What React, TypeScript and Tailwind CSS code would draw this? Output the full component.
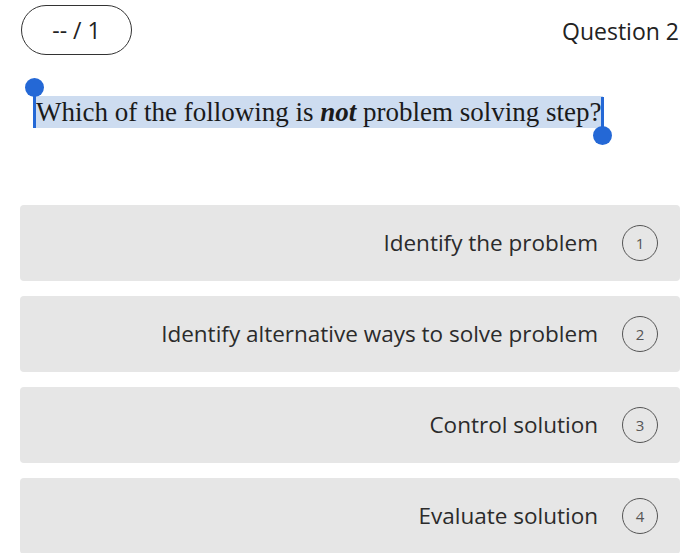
import React from 'react';

const options = [
  { n: 1, label: 'Identify the problem' },
  { n: 2, label: 'Identify alternative ways to solve problem' },
  { n: 3, label: 'Control solution' },
  { n: 4, label: 'Evaluate solution' },
];

function OptionCard({ n, label }: { n: number; label: string }) {
  return (
    <div className="h-[76px] rounded-[4px] bg-[#e6e6e6] flex items-center justify-end pr-[22px] gap-[24px]">
      <span className="text-[22.5px] text-[#2b2b2b]">{label}</span>
      <span className="w-[36px] h-[36px] rounded-full border-[1.5px] border-[#555] grid place-items-center text-[15px] text-[#555]">
        {n}
      </span>
    </div>
  );
}

export default function App() {
  return (
    <div className="w-[700px] h-[553px] overflow-hidden bg-white font-['Open_Sans',sans-serif]">
      {/* Header */}
      <div className="flex items-center justify-between pl-[21px] pr-[21px] pt-[5px]">
        <div className="w-[111px] h-[50px] rounded-full border-[1.5px] border-[#333] grid place-items-center text-[23px] text-[#222]">
          -- / 1
        </div>
        <div className="text-[23px] text-[#222] pt-[2px]">Question 2</div>
      </div>

      {/* Question with selection */}
      <div className="pl-[34px] pt-[42px] h-[150px]">
        <div className="relative inline-block">
          <span className="bg-[#cddcf0] px-[2px] py-[1px] font-['Liberation_Serif',serif] text-[27px] leading-[31px] text-[#1a1a1a]">
            Which of the following is <b><i>not</i></b> problem solving step?
          </span>
          <span className="absolute left-[-1px] top-[-5px] bottom-0 w-[3px] bg-[#2468d6]" />
          <span className="absolute left-[-9px] top-[-19px] w-[19px] h-[19px] rounded-full bg-[#2468d6]" />
          <span className="absolute right-[-1px] top-0 bottom-[-6px] w-[3px] bg-[#2468d6]" />
          <span className="absolute right-[-9px] bottom-[-17px] w-[19px] h-[19px] rounded-full bg-[#2468d6]" />
        </div>
      </div>

      {/* Options */}
      <div className="flex flex-col gap-[15px] px-[20px]">
        {options.map((o) => (
          <OptionCard key={o.n} n={o.n} label={o.label} />
        ))}
      </div>
    </div>
  );
}
